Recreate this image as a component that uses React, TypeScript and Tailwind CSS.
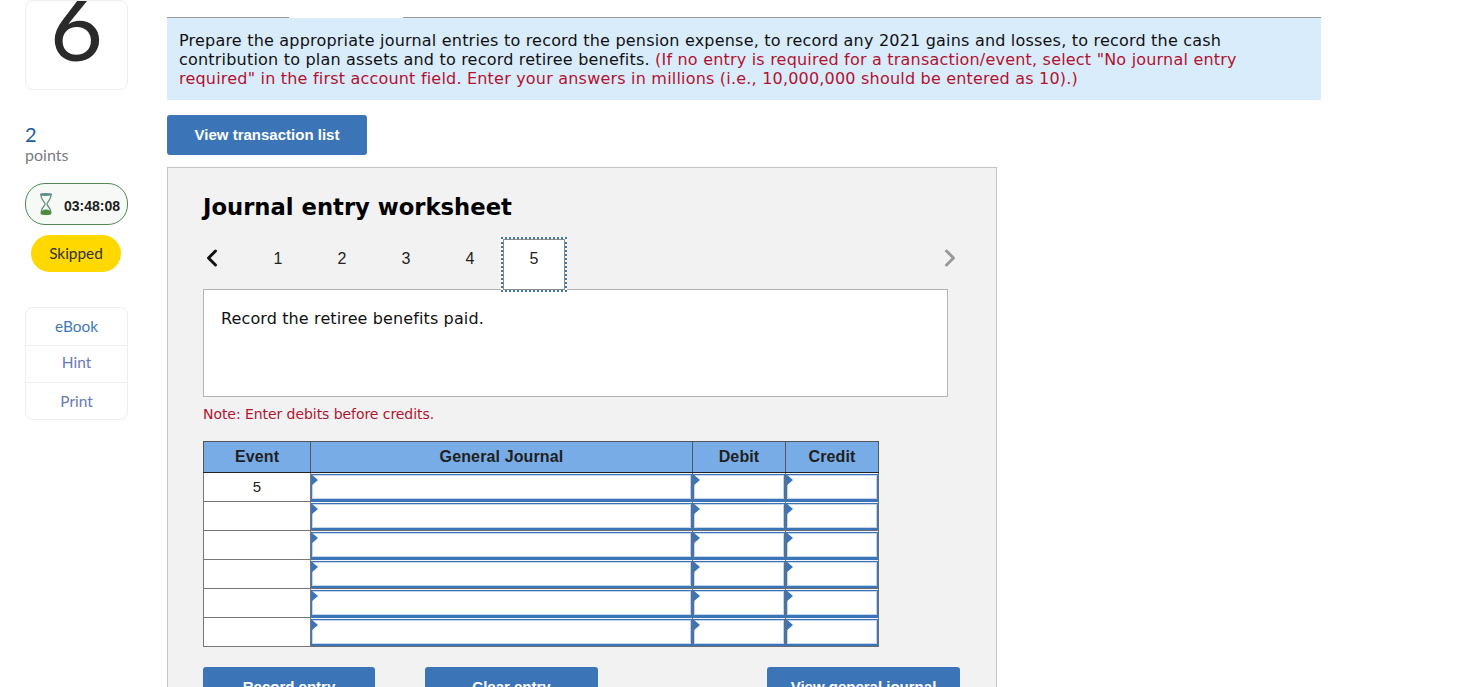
import { ChevronLeft, ChevronRight } from "lucide-react";

const verdana = "font-['DejaVu_Sans',sans-serif]";
const arial = "font-['Liberation_Sans',Arial,sans-serif]";
const side = "font-['Lato','Open_Sans',sans-serif]";

const rows = ["5", "", "", "", "", ""];
const btn = `h-10 rounded-[3px] bg-[#3b75b8] text-white font-bold text-[15px] ${arial}`;

function Hourglass() {
  return (
    <svg width="16" height="24" viewBox="0 0 16 24" fill="none">
      <path d="M2.5 2.5c0-1 11-1 11 0s-11 1-11 0z" stroke="#5f8f8f" strokeWidth="1.3" />
      <path d="M3 3c0 5.500 4 6.500 4 9s-4 3.500-4 8.500M13 3c0 5.500-4 6.500-4 9s4 3.500 4 8.500" stroke="#5f8f7a" strokeWidth="1.3" />
      <path d="M2.500 22c.5-3.500 3-4.500 5.500-4.500s5 1 5.500 4.500c-2 1.300-9 1.300-11 0z" fill="#4f8a3a" />
    </svg>
  );
}

function Cell({ blue }: { blue: boolean }) {
  return (
    <td className={`relative p-0 h-[29px] border border-[#6a6f76] ${blue ? "border-b-[#3b75b8]" : ""}`}>
      <div className="h-[27px] border border-b-2 border-[#3b75b8]">
        <div className="h-full bg-white border border-[#c3d5ec]" />
      </div>
      <span className="absolute left-0 top-[1px] w-0 h-0 border-y-[6px] border-y-transparent border-l-[7px] border-l-[#3b75b8]" />
    </td>
  );
}

export default function App() {
  return (
    <div className="h-[687px] overflow-hidden bg-white flex items-start pl-[25px]">
      <aside className={`w-[103px] shrink-0 flex flex-col ${side}`}>
        <div className="h-[90px] border border-[#eeeeee] rounded-lg flex items-end justify-center overflow-hidden">
          <span className="text-[92px] leading-[108px] text-[#2a2a2a] mb-[9px]">6</span>
        </div>
        <div className="mt-[33px] text-[20px] leading-[22px] text-[#1f5a9e]">2</div>
        <div className="text-[16px] leading-[20px] text-[#7a7a82]">points</div>
        <div className="mt-[18px] h-[42px] rounded-[20px] border border-[#4f8a4f] bg-[#f6f9f6] flex items-center pl-[12px] gap-[10px]">
          <Hourglass />
          <span className={`mt-[5px] text-[14px] font-bold text-[#1c1c1c] ${arial}`}>03:48:08</span>
        </div>
        <div className="mt-[10px] ml-[6px] mr-[7px] h-[37px] rounded-[19px] bg-[#ffd800] flex items-center justify-center text-[15.400px] text-[#333]">
          Skipped
        </div>
        <div className="mt-[35px] border border-[#eeeeee] rounded-lg text-center text-[15.400px] text-[#3f7ab8]">
          <div className="h-[38px] leading-[37px] border-b border-[#eeeeee]">eBook</div>
          <div className="h-[37px] leading-[33px] border-b border-[#eeeeee] text-[#6a79b8]">Hint</div>
          <div className="h-[36px] leading-[37px] text-[#6a79b8]">Print</div>
        </div>
      </aside>

      <main className="ml-[39px] w-[1154px] shrink-0 pt-[17px]">
        <div className="flex h-px">
          <div className="w-[122px] bg-[#999]" />
          <div className="w-[114px]" />
          <div className="flex-1 bg-[#999]" />
        </div>
        <div className={`h-[82px] bg-[#d9ecfb] px-3 pt-[13px] text-[16px] leading-[19px] tracking-[0.2px] text-[#111] ${verdana}`}>
          Prepare the appropriate journal entries to record the pension expense, to record any 2021 gains and losses, to record the cash contribution to plan assets and to record retiree benefits.{" "}
          <span className="text-[#b3122f]">
            (If no entry is required for a transaction/event, select "No journal entry required" in the first account field. Enter your answers in millions (i.e., 10,000,000 should be entered as 10).)
          </span>
        </div>
        <button className={`${btn} mt-[15px] w-[200px] block`}>View transaction list</button>

        <section className="mt-3 w-[830px] border border-[#c4c4c4] bg-[#f2f2f2] pl-[35px] pt-[23px] pb-8">
          <h2 className={`text-[22.700px] leading-[32px] font-bold text-black ${verdana}`}>Journal entry worksheet</h2>
          <div className={`mt-[15px] h-[53px] flex items-start relative w-[745px] text-[16px] leading-[24px] text-[#222] ${arial}`}>
            <ChevronLeft size={28} strokeWidth={2.500} className="text-[#111] mt-[6px] -ml-[5px] w-[28px]" />
            <div className="flex ml-[20px] mt-[9px]">
              {[1, 2, 3, 4].map((n) => (
                <div key={n} className="w-[64px] text-center">{n}</div>
              ))}
            </div>
            <div className="z-10 -mt-[1px] -ml-[1px] w-[66px] h-[55px] pb-[11px] bg-white border-[2px] border-dotted border-[#3b75b8] flex items-center justify-center outline outline-1 -outline-offset-3 outline-[#888]">
              5
            </div>
            <ChevronRight size={28} strokeWidth={2.500} className="absolute right-[-16px] top-[6px] text-[#999]" />
          </div>
          <div className={`-mt-[2px] h-[108px] w-[745px] border border-[#b5b5b5] bg-white pl-[17px] pt-[18px] text-[16px] leading-[22px] tracking-[0.12px] text-[#111] ${verdana}`}>
            Record the retiree benefits paid.
          </div>
          <p className={`mt-[8px] text-[14px] leading-[19px] tracking-[-0.06px] text-[#b3122f] ${verdana}`}>Note: Enter debits before credits.</p>

          <table className={`mt-[17px] table-fixed border-collapse w-[675px] text-[16px] ${arial}`}>
            <colgroup>
              <col className="w-[107px]" />
              <col className="w-[382px]" />
              <col className="w-[93px]" />
              <col className="w-[93px]" />
            </colgroup>
            <thead>
              <tr className="h-[31px] bg-[#78ace6] font-bold text-[#1f1f1f] tracking-[0.13px]">
                {["Event", "General Journal", "Debit", "Credit"].map((h) => (
                  <th key={h} className="border border-[#555] border-b-[#222] font-bold">{h}</th>
                ))}
              </tr>
            </thead>
            <tbody>
              {rows.map((r, i) => (
                <tr key={i} className="h-[29px]">
                  <td className="p-0 border border-[#777] bg-white text-center text-[15px] leading-[20px] text-[#222] align-middle">{r}</td>
                  {[0, 1, 2].map((c) => (
                    <Cell key={c} blue={i % 2 === 0} />
                  ))}
                </tr>
              ))}
            </tbody>
          </table>

          <div className="mt-[20px] flex w-[757px]">
            <button className={`${btn} w-[172px]`}>Record entry</button>
            <button className={`${btn} w-[173px] ml-[50px]`}>Clear entry</button>
            <button className={`${btn} w-[193px] ml-auto`}>View general journal</button>
          </div>
        </section>
      </main>
    </div>
  );
}
